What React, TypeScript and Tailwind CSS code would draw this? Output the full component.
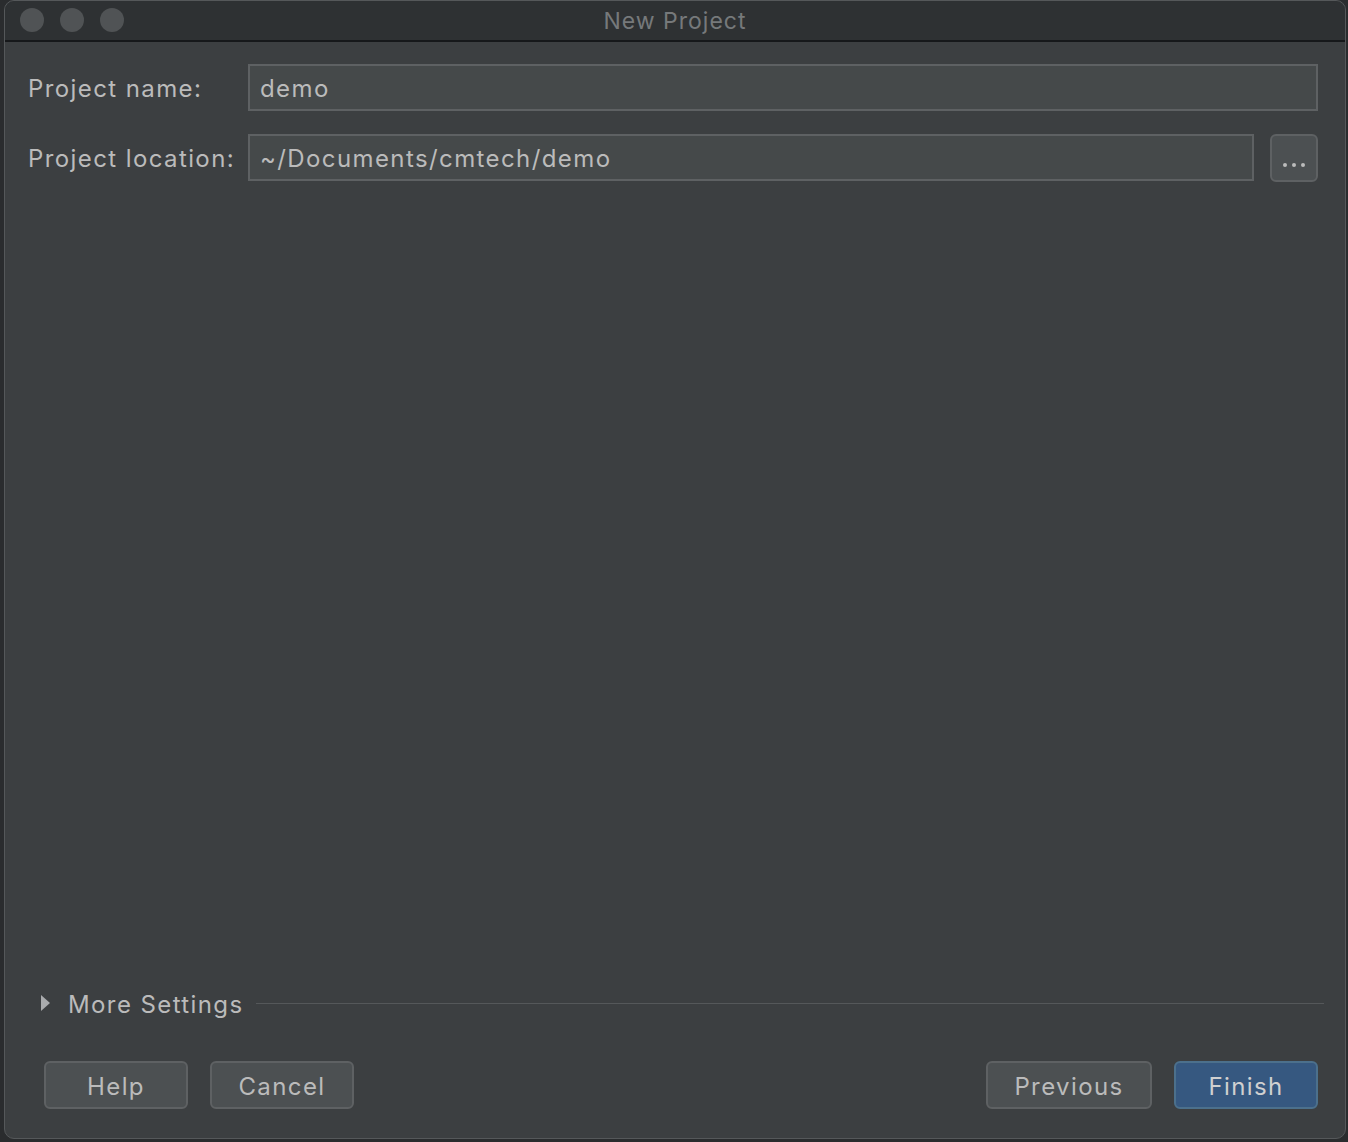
const font = { fontFamily: "Inter, 'Liberation Sans', sans-serif" };

function Field({ label, value, browse }: { label: string; value: string; browse?: boolean }) {
  return (
    <div className="flex items-center h-[47px]">
      <div className="w-[220px] shrink-0 pt-[3px] text-[24px] tracking-[1.4px] text-[#bbbbbb]">{label}</div>
      <div className="flex-1 h-full flex items-center px-[10px] pt-[3px] bg-[#45494a] border-2 border-[#5e6163] text-[24px] tracking-[1.4px] text-[#bbbbbb]">
        {value}
      </div>
      {browse && (
        <button className="ml-[16px] w-[48px] h-[48px] rounded-[6px] bg-[#4c5052] border-2 border-[#5e6163] flex items-end justify-center pb-[13px] gap-[5px]">
          <span className="w-[4px] h-[4px] rounded-full bg-[#bbbbbb]" />
          <span className="w-[4px] h-[4px] rounded-full bg-[#bbbbbb]" />
          <span className="w-[4px] h-[4px] rounded-full bg-[#bbbbbb]" />
        </button>
      )}
    </div>
  );
}

function Btn({ children, primary, w }: { children: string; primary?: boolean; w: string }) {
  return (
    <button
      className={`${w} h-[48px] pt-[3px] rounded-[6px] border-2 text-[24px] tracking-[1.4px] ${
        primary ? "bg-[#365880] border-[#4c708c] text-[#d0d0d0]" : "bg-[#4c5052] border-[#5e6163] text-[#bbbbbb]"
      }`}
    >
      {children}
    </button>
  );
}

export default function App() {
  return (
    <div className="w-[1348px] h-[1142px] bg-[#2a2c2e] overflow-hidden" style={font}>
      <div className="ml-[4px] w-[1342px] h-[1139px] rounded-[10px] border border-[#55585a] bg-[#3c3f41] flex flex-col overflow-hidden">
        <div className="relative h-[41px] shrink-0 bg-[#2e3133] border-b-2 border-[#16181a] flex items-center justify-center">
          <div className="absolute left-[15px] top-[7px] flex gap-[16px]">
            <span className="w-[24px] h-[24px] rounded-full bg-[#505355]" />
            <span className="w-[24px] h-[24px] rounded-full bg-[#505355]" />
            <span className="w-[24px] h-[24px] rounded-full bg-[#505355]" />
          </div>
          <span className="pt-[2px] text-[23px] tracking-[1px] text-[#76797b]">New Project</span>
        </div>

        <div className="flex-1 flex flex-col pl-[23px] pr-[27px] pt-[22px]">
          <div className="flex flex-col gap-[23px]">
            <Field label="Project name:" value="demo" />
            <Field label="Project location:" value="~/Documents/cmtech/demo" browse />
          </div>

          <div className="flex-1" />

          <div className="flex items-center h-[30px] pl-[12px] -mr-[6px]">
            <svg width="12" height="18" viewBox="0 0 12 18" className="shrink-0">
              <path d="M1 1 L10 9 L1 17 Z" fill="#a9abad" />
            </svg>
            <span className="ml-[16px] pt-[3px] text-[24px] tracking-[1.4px] text-[#bbbbbb]">More Settings</span>
            <div className="flex-1 ml-[12px] h-px bg-[#55585a]" />
          </div>

          <div className="flex items-center mt-[43px] mb-[29px] pl-[16px]">
            <Btn w="w-[144px]">Help</Btn>
            <div className="w-[22px]" />
            <Btn w="w-[144px]">Cancel</Btn>
            <div className="flex-1" />
            <Btn w="w-[166px]">Previous</Btn>
            <div className="w-[22px]" />
            <Btn w="w-[144px]" primary>Finish</Btn>
          </div>
        </div>
      </div>
    </div>
  );
}
